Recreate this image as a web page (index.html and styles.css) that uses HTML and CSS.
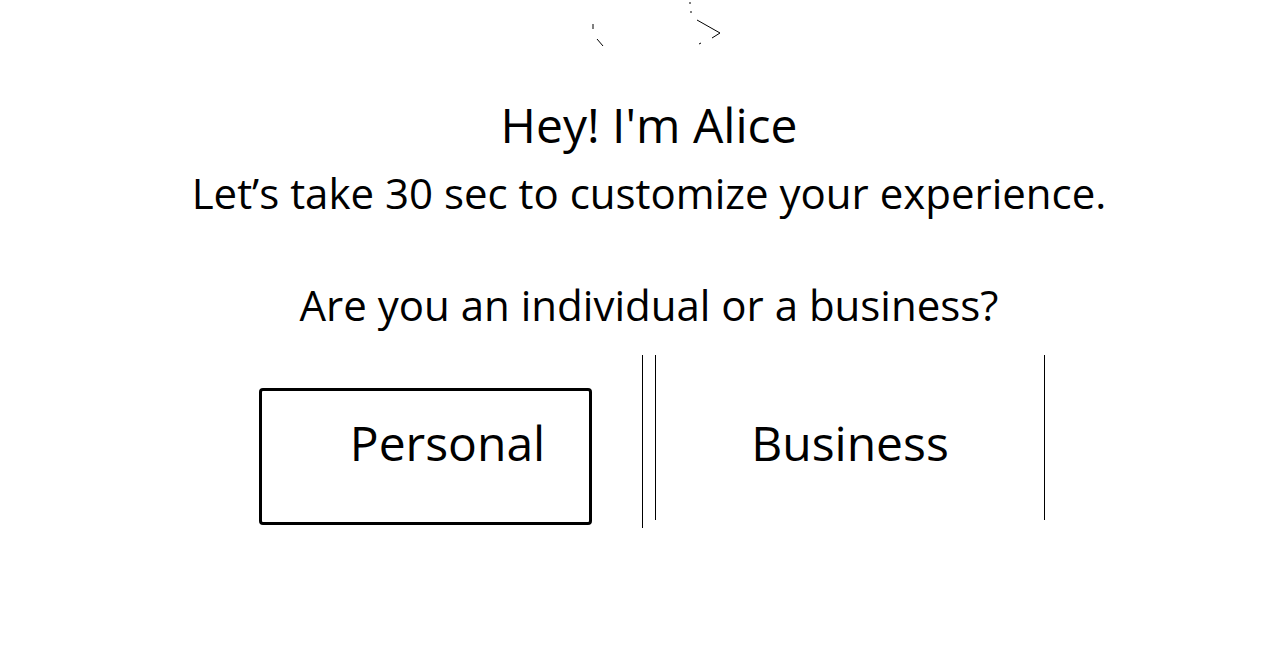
FILE: index.html
```html
<!DOCTYPE html>
<html>
<head>
<meta charset="utf-8">
<link rel="stylesheet" href="styles.css">
</head>
<body>
<main class="page">
  <div class="avatar">
    <svg width="140" height="50" viewBox="0 0 140 50">
      <g fill="none" stroke="#000" stroke-width="1">
        <path d="M14 24 L14 29"/>
        <path d="M18 39 L24 46"/>
        <path d="M111 2 L111 4"/>
        <path d="M112 11 L112 13"/>
        <path d="M118 20 L141 33 L133 38"/>
        <path d="M122 43 L120 44"/>
      </g>
    </svg>
  </div>
  <h1 class="title">Hey! I'm Alice</h1>
  <p class="subtitle">Let’s take 30 sec to customize your experience.</p>
  <p class="question">Are you an individual or a business?</p>
  <div class="choices">
    <div class="choice choice-left">
      <div class="focus-ring"></div>
      <span class="choice-label">Personal</span>
    </div>
    <div class="choice choice-right">
      <span class="choice-label">Business</span>
    </div>
  </div>
</main>
</body>
</html>
```

FILE: styles.css
```css
html, body {
  margin: 0;
  padding: 0;
  background: #fff;
}
body {
  font-family: "Open Sans", Lato, sans-serif;
  color: #000;
  width: 1280px;
  height: 658px;
  overflow: hidden;
}
.page {
  display: flex;
  flex-direction: column;
  align-items: center;
  padding-left: 18px;
}
.avatar {
  height: 50px;
  width: 140px;
  margin-bottom: 45px;
}
.avatar svg { overflow: visible; display: block; }
.title {
  margin: 0;
  font-weight: 400;
  font-size: 48px;
  line-height: 60px;
}
.subtitle {
  margin: 13px 0 0;
  font-size: 42px;
  line-height: 50px;
}
.question {
  margin: 62px 0 0;
  font-size: 42px;
  line-height: 50px;
}
.choices {
  display: flex;
  gap: 12px;
  margin-top: 25px;
}
.choice {
  position: relative;
  width: 390px;
  height: 173px;
  display: flex;
  align-items: flex-start;
  justify-content: center;
  padding-top: 58px;
  box-sizing: border-box;
}
.choice-left {
  border-right: 1px solid #000;
}
.choice-right {
  border-left: 1px solid #000;
  border-right: 1px solid #000;
  height: 165px;
}
.choice-label {
  font-size: 48px;
  line-height: 60px;
  position: relative;
}
.focus-ring {
  position: absolute;
  left: 6px;
  top: 33px;
  width: 333px;
  height: 137px;
  border: 3px solid #000;
  border-radius: 4px;
  box-sizing: border-box;
}
```
